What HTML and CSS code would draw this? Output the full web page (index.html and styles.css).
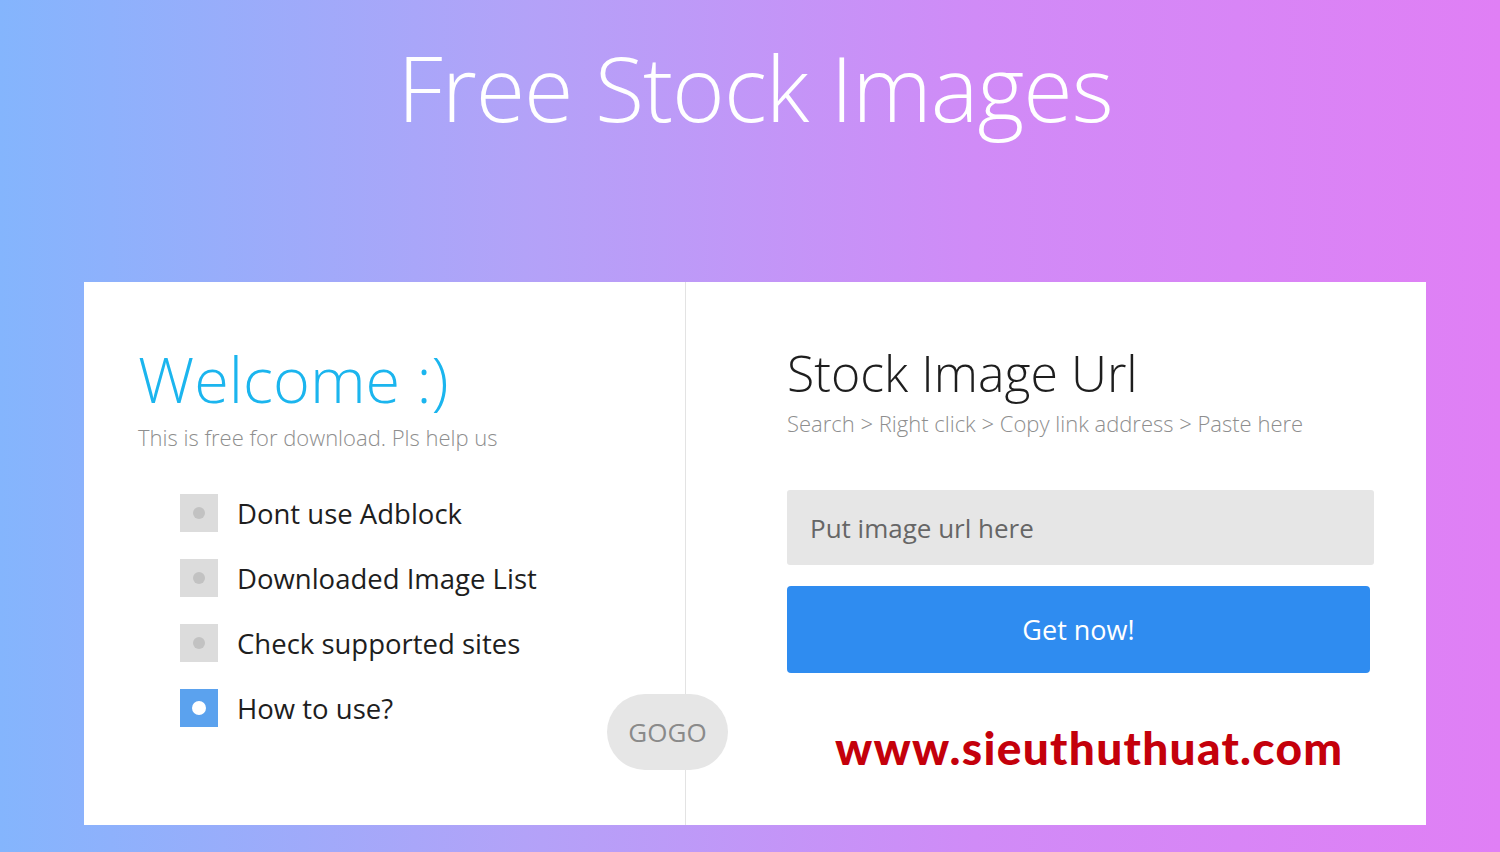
FILE: index.html
```html
<!DOCTYPE html>
<html>
<head>
  <link rel="stylesheet" href="styles.css">
</head>
<body>
  <div class="page">
    <h1 class="title">Free Stock Images</h1>
    <div class="card">
      <div class="col-left">
        <h2 class="welcome">Welcome :)</h2>
        <p class="sub">This is free for download. Pls help us</p>
        <ul class="menu">
          <li><span class="dot"></span>Dont use Adblock</li>
          <li><span class="dot"></span>Downloaded Image List</li>
          <li><span class="dot"></span>Check supported sites</li>
          <li class="active"><span class="dot"></span>How to use?</li>
        </ul>
      </div>
      <div class="col-right">
        <h2 class="heading">Stock Image Url</h2>
        <p class="sub">Search &gt; Right click &gt; Copy link address &gt; Paste here</p>
        <input class="url" type="text" placeholder="Put image url here">
        <button class="get">Get now!</button>
        <div class="mark">www.sieuthuthuat.com</div>
      </div>
      <button class="gogo">GOGO</button>
    </div>
  </div>
</body>
</html>
```

FILE: styles.css
```css
body {
  margin: 0;
  font-family: "Open Sans", "Liberation Sans", sans-serif;
}

.page {
  height: 852px;
  background: linear-gradient(to right, #84b5fd 0%, #b3a2f8 35%, #d08bf7 65%, #e07ff5 100%);
  padding-top: 22px;
  box-sizing: border-box;
}

.title {
  margin: 0 0 0 10px;
  text-align: center;
  font-weight: 300;
  font-size: 90px;
  line-height: 130px;
  color: #fff;
  letter-spacing: -1px;
}

.card {
  position: relative;
  margin: 130px 74px 0 84px;
  height: 543px;
  background: #fff;
  display: flex;
}

.col-left {
  width: 603px;
  border-right: 1px solid #e3e3e3;
  padding: 54px 0 0 54px;
  box-sizing: border-box;
}

.col-right {
  flex: 1;
  padding: 60px 52px 0 101px;
}

.welcome {
  margin: 0;
  font-weight: 300;
  font-size: 63px;
  line-height: 86px;
  color: #1bb5ee;
}

.sub {
  margin: 0;
  font-weight: 300;
  font-size: 22px;
  color: #8e8e8e;
}

.menu {
  list-style: none;
  margin: 42px 0 0 42px;
  padding: 0;
}

.menu li {
  display: flex;
  align-items: center;
  height: 38px;
  margin-bottom: 27px;
  font-size: 27.5px;
  color: #1e1e1e;
}

.dot {
  width: 38px;
  height: 38px;
  background: #dcdcdc;
  margin-right: 19px;
  display: flex;
  align-items: center;
  justify-content: center;
}

.dot::after {
  content: "";
  width: 12px;
  height: 12px;
  border-radius: 50%;
  background: #c2c2c2;
}

.menu li.active .dot {
  background: #5ba2ee;
}

.menu li.active .dot::after {
  width: 14px;
  height: 14px;
  background: #fff;
}

.heading {
  margin: 0;
  font-weight: 300;
  font-size: 50px;
  line-height: 62px;
  color: #1e1e1e;
}

.col-right .sub {
  margin-top: 4px;
}

.url {
  display: block;
  width: 587px;
  height: 75px;
  margin-top: 52px;
  box-sizing: border-box;
  border: 0;
  border-radius: 3px;
  background: #e6e6e6;
  padding: 0 23px;
  font-family: "Open Sans", sans-serif;
  font-size: 26px;
}

.url::placeholder {
  color: #666;
}

.get {
  display: block;
  width: 583px;
  height: 87px;
  margin-top: 21px;
  border: 0;
  border-radius: 4px;
  background: #2f8cf0;
  color: #fff;
  font-family: "Open Sans", sans-serif;
  font-size: 27px;
}

.mark {
  margin: 47px 0 0 48px;
  font-family: Lato, sans-serif;
  font-weight: 900;
  font-size: 46px;
  letter-spacing: 1.3px;
  color: #c4000b;
}

.gogo {
  position: absolute;
  left: 523px;
  top: 412px;
  width: 121px;
  height: 76px;
  border: 0;
  border-radius: 38px;
  background: #e6e6e6;
  color: #8a8a8a;
  font-family: "Open Sans", sans-serif;
  font-size: 26px;
}
```
